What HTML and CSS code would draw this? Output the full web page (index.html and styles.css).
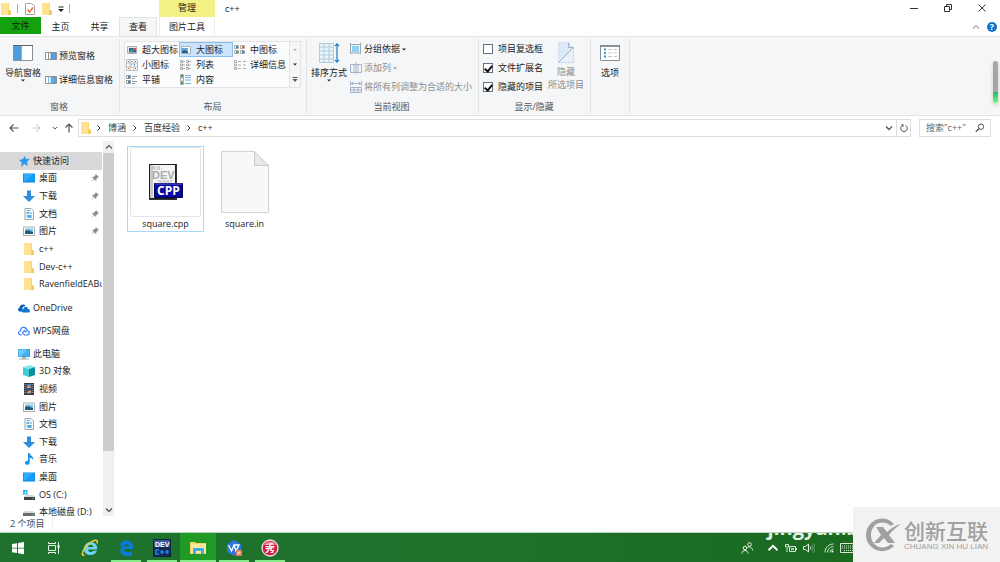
FILE: index.html
```html
<!DOCTYPE html>
<html lang="zh-CN">
<head>
<meta charset="utf-8">
<meta name="viewport" content="width=device-width, initial-scale=1">
<title>c++</title>
<link rel="stylesheet" href="styles.css">
</head>
<body>
<svg class="sprite" aria-hidden="true">
  <symbol id="folder" viewBox="0 0 12 14"><path d="M1 1h8v7l2 1v4H1z" fill="#f8d775"/><path d="M1 1h7v12H1z" fill="#ffe391"/><path d="M8.500 8.500h2v4.500h-2z" fill="#f0c659"/></symbol>
  <symbol id="desktop" viewBox="0 0 12 12"><path d="M0 1.500h12v9H0z" fill="#0a84dc"/><path d="M.5 2h11v7.500H.5z" fill="#139dfb"/><path d="M1 2h9L2 9.500H1z" fill="#2cacff"/></symbol>
  <symbol id="download" viewBox="0 0 12 12"><path d="M4 .5h4V6h4L6 12 0 6h4z" fill="#2f8ddd"/></symbol>
  <symbol id="document" viewBox="0 0 12 12"><path d="M2 .5h6l2.500 2.500v8.500H2z" fill="#f7fafc" stroke="#9fa6ab"/><path d="M3.500 4h3v2h-3zm1 3h4v3h-4z" fill="#68b5ea"/><path d="M4 2.500h3M7 5h2M3.500 8h5" stroke="#368fd0" stroke-width=".8"/></symbol>
  <symbol id="picture" viewBox="0 0 12 12"><path d="M.5 2h11v8.500H.5z" fill="#fff" stroke="#a8adb1"/><path d="M2 3.500h8V9H2z" fill="#82c6ee"/><path d="M2 6l3-1 5 2v2H2z" fill="#245c7b"/></symbol>
  <symbol id="star" viewBox="0 0 12 12"><path d="M7 1l1 3 4-.2L9 7l1 4-3.500-2L3 12l.7-4.500L1 5l3.500-.8z" fill="#2d9bea"/></symbol>
  <symbol id="pin" viewBox="0 0 10 10"><path d="M6 0l4 4-1.500.4-1.800 2L6.500 9 4 6.500 0 10l3.400-4L1 3.600l2.600-.3 2-1.800z" fill="#7e909c"/></symbol>
  <symbol id="onedrive" viewBox="0 0 12 12"><path d="M1 9.500C-.5 8 0 6 1.500 6c0-3 4-5 6-2C4.500 4 4 7 4 9.500z" fill="#0b5eb5"/><path d="M4.500 10.500c-2-1.500-.3-4 1-3.500C6 4 9.500 4 10 7c2.500 0 2.500 3.500.5 3.500z" fill="#1178cf"/></symbol>
  <symbol id="cloud" viewBox="0 0 12 12"><path d="M4 10H3C-.3 10 .2 6 2.500 6 2 1.500 8.500 1 9 5.500c3 0 3 4.500 0 4.500H6.500L4.500 8 6.500 5.500l2 2" fill="none" stroke="#3d84f1" stroke-width="1.200"/></symbol>
  <symbol id="pc" viewBox="0 0 12 12"><path d="M0 1h12v8H0z" fill="#278cca"/><path d="M.5 1.500h11v7H.5z" fill="#42b3f1"/><path d="M.5 1.500h9L2 8.500H.5z" fill="#70cbfa"/><path d="M4.500 9h3v1.500H11v1H1v-1h3.500z" fill="#9aabb6"/></symbol>
  <symbol id="cube" viewBox="0 0 12 12"><path d="M0 2l7-2 5 2-6 2z" fill="#8ae8ed"/><path d="M0 2l6 2v8l-6-2z" fill="#45cbd8"/><path d="M6 4l6-2v8l-6 2z" fill="#078e9f"/></symbol>
  <symbol id="video" viewBox="0 0 12 12"><path d="M1 0h10v12H1z" fill="#373b44"/><path d="M3.500 1h5v4.500h-5z" fill="#527bbc"/><path d="M3.500 6.500h5V11h-5z" fill="#3c5d9b"/><path d="M4 4l2-2 2 3H4zm0 5l4-2v3H4z" fill="#e2a24c"/><path d="M2.200 1v10M9.800 1v10" stroke="#aaa" stroke-dasharray="1 1"/></symbol>
  <symbol id="music" viewBox="0 0 12 12"><path d="M5 0h1.500c.5 3 4.500 3 3.500 7-.5-1.500-2-2-3.300-2.200V9.500c0 3-4.700 3-4.700.5C2 8 4 7.600 5 8z" fill="#1593e8"/></symbol>
  <symbol id="drive" viewBox="0 0 12 12"><path d="M2 5h8l2 2H0z" fill="#d4d7d9"/><path d="M0 7h12v3H0z" fill="#6b6e70"/><path d="M9.500 8h1v1h-1z" fill="#5bea62"/></symbol>
  <symbol id="osdrive" viewBox="0 0 12 12"><path d="M0 1h2v2H0zm2.500 0h2v2h-2zM0 3.500h2v2H0zm2.500 0h2v2h-2z" fill="#11aee8"/><path d="M3 6h7l2 2H1z" fill="#d2d5d7"/><path d="M1 8h11v3H1z" fill="#414446"/><path d="M9.500 9h1v1h-1z" fill="#5bea62"/></symbol>
  <symbol id="chev-down" viewBox="0 0 8 8"><path d="M1 2.500l3 3 3-3" fill="none" stroke="currentColor" stroke-width="1.300"/></symbol>
  <symbol id="chev-right" viewBox="0 0 8 8"><path d="M2.500 1.500L5 4 2.500 6.500" fill="none" stroke="currentColor"/></symbol>
  <symbol id="chev-up" viewBox="0 0 8 8"><path d="M1 5.500l3-3 3 3" fill="none" stroke="currentColor" stroke-width="1.200"/></symbol>
  <symbol id="arrow-left" viewBox="0 0 10 10"><path d="M9.500 5H1M4.500 1.500L1 5l3.500 3.500" fill="none" stroke="currentColor" stroke-width="1.200"/></symbol>
  <symbol id="arrow-right" viewBox="0 0 10 10"><path d="M.5 5H9M5.500 1.500L9 5 5.500 8.500" fill="none" stroke="currentColor" stroke-width="1.200"/></symbol>
  <symbol id="arrow-up" viewBox="0 0 10 10"><path d="M5 9.500V1M1.500 4.500L5 1l3.500 3.500" fill="none" stroke="currentColor" stroke-width="1.200"/></symbol>
  <symbol id="caret" viewBox="0 0 4 3"><path d="M0 .5h4l-2 2z" fill="currentColor"/></symbol>
</svg>

<header class="head">
  <div class="quick">
    <svg width="12" height="14"><use href="#folder"/></svg>
    <span class="bar"></span>
    <button aria-label="属性"><svg width="12" height="14" viewBox="0 0 12 14"><path d="M1.500 1.500h6L10.500 4v8.500h-9z" fill="#fff" stroke="#a4a4a4"/><path d="M3.500 7.500l2 2.500L9 5.500" fill="none" stroke="#ee7343" stroke-width="1.500"/></svg></button>
    <button aria-label="新建文件夹"><svg width="12" height="14"><use href="#folder"/></svg></button>
    <button aria-label="自定义快速访问工具栏"><svg width="6" height="8" viewBox="0 0 6 8"><path d="M.5 2h5" stroke="#222"/><path d="M0 4h6L3 7z" fill="#222"/></svg></button>
    <span class="bar"></span>
  </div>
  <div class="context">管理</div>
  <div class="title">c++</div>
  <div class="window-buttons">
    <button aria-label="最小化"><svg width="10" height="10" viewBox="0 0 10 10"><path d="M1 5.500h8" stroke="#333"/></svg></button>
    <button aria-label="还原"><svg width="10" height="10" viewBox="0 0 10 10"><path d="M1.500 3.500h5v5h-5zM3.500 3V1.500h5v5H7" fill="none" stroke="#333"/></svg></button>
    <button aria-label="关闭"><svg width="10" height="10" viewBox="0 0 10 10"><path d="M1.500 1.500l7 7M8.500 1.500l-7 7" stroke="#333"/></svg></button>
  </div>
  <nav class="tabs">
    <button class="tab file">文件</button><button class="tab">主页</button><button class="tab">共享</button><button class="tab active">查看</button>
  </nav>
  <button class="tab tools">图片工具</button>
  <div class="help">
    <button class="faint" aria-label="折叠功能区"><svg width="8" height="8"><use href="#chev-up"/></svg></button>
    <button class="question" aria-label="帮助">?</button>
  </div>
</header>

<section class="ribbon">
  <div class="group panes">
    <div class="controls">
      <button class="big"><svg width="22" height="22" viewBox="0 0 22 22"><path d="M1.500 3.500h19v15h-19z" fill="#fff" stroke="#8a8f94"/><path d="M2 4h7v14H2z" fill="#4a9de0"/><path d="M9.500 4v14" stroke="#a5aab0"/><path d="M1 3.500h20" stroke="#666"/></svg><span>导航窗格</span><svg width="4" height="3"><use href="#caret"/></svg></button>
      <div class="stack two">
        <button><svg width="12" height="10" viewBox="0 0 12 10"><path d="M.5 1.500h11v7H.5z" fill="#fff" stroke="#8a8f94"/><path d="M6 2h5v6H6z" fill="#4a9de0"/><path d="M3.500 2v6M6 2v6" stroke="#8a8f94"/></svg>预览窗格</button>
        <button><svg width="12" height="10" viewBox="0 0 12 10"><path d="M.5 1.500h11v7H.5z" fill="#fff" stroke="#8a8f94"/><path d="M6 2h5v6H6z" fill="#4a9de0"/><path d="M7 4h3M7 6h3M3.500 2v6M6 2v6" stroke="#80b9e7"/></svg>详细信息窗格</button>
      </div>
    </div>
    <h2>窗格</h2>
  </div>
  <div class="group layout">
    <div class="controls">
      <div class="gallery">
        <button><svg width="12" height="12" viewBox="0 0 12 12"><path d="M1.500 2.500h9v7h-9z" fill="#dfeaf3" stroke="#aaa"/><path d="M3 4h7v4.500H3z" fill="#2b65ae"/><path d="M3 8l3-3 2 3z" fill="#49a34d"/><path d="M7 4h3v2H7z" fill="#db553d"/></svg>超大图标</button>
        <button class="selected"><svg width="12" height="12" viewBox="0 0 12 12"><path d="M1.500 2.500h9v7h-9z" fill="#fff" stroke="#a5b3bd"/><path d="M2 4h6v4H2z" fill="#65a9dc"/><path d="M2 7l3-1 3 2v1H2z" fill="#285d8b"/></svg>大图标</button>
        <button><svg width="12" height="12" viewBox="0 0 12 12"><path d="M.5 1.500h4v3h-4zm6 0h4v3h-4zm-6 5h4v3h-4zm6 0h4v3h-4z" fill="#fff" stroke="#aaa"/><path d="M2 2h2v2H2zM8 7h2v2H8z" fill="#378ace"/><path d="M8 2h2v2H8z" fill="#d7663b"/><path d="M2 7h2v2H2z" fill="#45a150"/></svg>中图标</button>
        <button><svg width="12" height="12" viewBox="0 0 12 12"><path d="M.5.500h11v11H.5zM4 .5v11M8 .5v11M.5 4h11M.5 8h11" fill="#fff" stroke="#bbb"/><path d="M2 2h1v1H2zm7 3H8v1h1z" fill="#378ace"/><path d="M5 2h1v1H5zM2 9h1v1H2zm7-7h1v1H9z" fill="#d7663b"/><path d="M5 5h1v1H5zm4 4h1v1H9z" fill="#45a150"/></svg>小图标</button>
        <button><svg width="12" height="12" viewBox="0 0 12 12"><path d="M.5 1.500h2v2h-2zm0 3.500h2v2h-2zm0 3.500h2v2h-2zm6-7h2v2h-2zm0 3.500h2v2h-2zm0 3.500h2v2h-2zM3 2.500h2M3 6h2M3 9.500h2M9 2.500h2M9 6h2M9 9.500h2" fill="none" stroke="#aaa"/></svg>列表</button>
        <button><svg width="12" height="12" viewBox="0 0 12 12"><path d="M.5 1.500h2v2h-2zm0 3.500h2v2h-2zm0 3.500h2v2h-2zM4 2.500h3M4 6h3M4 9.500h3M9 2.500h3M9 6h3M9 9.500h3" fill="none" stroke="#aaa"/></svg>详细信息</button>
        <button><svg width="12" height="12" viewBox="0 0 12 12"><path d="M.5 1.500h4v3h-4zm0 5h4v3h-4zM6 2.500h5M6 4.500h3M6 7.500h5M6 9.500h3" fill="none" stroke="#999"/><path d="M2 2h2v2H2zM2 7h2v2H2z" fill="#378ace"/></svg>平铺</button>
        <button><svg width="12" height="12" viewBox="0 0 12 12"><path d="M.5.500h3v3h-3zm0 3.500h3v3h-3zm0 3.500h3v3h-3z" fill="none" stroke="#aaa"/><path d="M5 1.500h6M5 3.500h6M5 6h6M5 9.500h6" stroke="#79ade0"/><path d="M1 1h2v2H1zm0 7h2v2H1z" fill="#45a150"/></svg>内容</button>
      </div>
      <div class="gallery-scroll">
        <button class="faint" aria-label="上一行"><svg width="4" height="3" viewBox="0 0 4 3"><path d="M0 2.500h4l-2-2z" fill="currentColor"/></svg></button>
        <button aria-label="下一行"><svg width="4" height="3"><use href="#caret"/></svg></button>
        <button aria-label="更多"><svg width="6" height="6" viewBox="0 0 6 6"><path d="M.5.500h5" stroke="#555"/><path d="M.5 2h5L3 5z" fill="#555"/></svg></button>
      </div>
    </div>
    <h2>布局</h2>
  </div>
  <div class="group view">
    <div class="controls">
      <button class="big"><svg width="22" height="22" viewBox="0 0 22 22"><path d="M1.500 1.500h14v19h-14zM6 1v20M11 1v20M1 5h15M1 9h15M1 13h15M1 17h15" fill="#e8f5fd" stroke="#b3cbdb"/><path d="M19 2v18M17 4l2-2 2 2M17 18l2 2 2-2" fill="none" stroke="#2d83c5" stroke-width="1.300"/></svg><span>排序方式</span><svg width="4" height="3"><use href="#caret"/></svg></button>
      <div class="stack">
        <button><svg width="12" height="12" viewBox="0 0 12 12"><path d="M.5 0v11M10.500 0v11M0 1.500h11M0 10h11" stroke="#9ba7b0"/><path d="M2 3h7v6H2z" fill="#8fd0f7"/></svg>分组依据<svg width="4" height="3"><use href="#caret"/></svg></button>
        <button disabled><svg width="12" height="12" viewBox="0 0 12 12"><path d="M.5 2.500h11v8H.5zM4 2v9M8 2v9M6 0v12" fill="none" stroke="#a3b2c8"/></svg>添加列<svg width="4" height="3"><use href="#caret"/></svg></button>
        <button disabled><svg width="12" height="12" viewBox="0 0 12 12"><path d="M.5 6.500h11v5H.5zM4 6v5M8 6v5M0 9h12M.5 0v5M11.500 0v5M1 2.500h10M3 1L1.500 2.500 3 4M9 1l1.500 1.500L9 4" fill="none" stroke="#a3b2c8"/></svg>将所有列调整为合适的大小</button>
      </div>
    </div>
    <h2>当前视图</h2>
  </div>
  <div class="group show">
    <div class="controls">
      <div class="stack">
        <label><input type="checkbox">项目复选框</label>
        <label><input type="checkbox" checked>文件扩展名</label>
        <label><input type="checkbox" checked>隐藏的项目</label>
      </div>
      <button class="big" disabled><svg width="18" height="22" viewBox="0 0 18 22"><path d="M1.500.500h10l5 5v15h-15z" fill="#e9f0f9" stroke="#c1cfe2" stroke-dasharray="2 1"/><path d="M1.500.500h10l5 5L1.500 20z" fill="#dce8f6"/><path d="M11.500.500v5h5L1.500 20.500" fill="none" stroke="#9fb3cf"/></svg><span>隐藏</span><span>所选项目</span></button>
    </div>
    <h2>显示/隐藏</h2>
  </div>
  <div class="group options">
    <div class="controls">
      <button class="big"><svg width="22" height="22" viewBox="0 0 22 22"><path d="M1.500 3.500h19v15h-19z" fill="#fff" stroke="#8a8f94"/><path d="M1 4h20" stroke="#8a8f94" stroke-width="2"/><path d="M5 7.500h2M5 11h2M5 14.500h2" stroke="#3c91d2" stroke-width="2"/><path d="M9 7.500h4M15 7.500h3M9 11h4M15 11h3M9 14.500h4M15 14.500h3" stroke="#c4c7c9"/></svg><span>选项</span></button>
    </div>
  </div>
</section>

<div class="navigation">
  <div class="history">
    <button aria-label="后退"><svg width="10" height="10"><use href="#arrow-left"/></svg></button>
    <button disabled aria-label="前进"><svg width="10" height="10"><use href="#arrow-right"/></svg></button>
    <button class="recent" aria-label="最近浏览的位置"><svg width="6" height="6"><use href="#chev-down"/></svg></button>
    <button aria-label="上移"><svg width="10" height="10"><use href="#arrow-up"/></svg></button>
  </div>
  <div class="address">
    <svg width="12" height="14"><use href="#folder"/></svg>
    <svg width="8" height="8"><use href="#chev-right"/></svg><a href="#">博涵</a>
    <svg width="8" height="8"><use href="#chev-right"/></svg><a href="#">百度经验</a>
    <svg width="8" height="8"><use href="#chev-right"/></svg><a href="#">c++</a>
    <button class="drop" aria-label="历史记录"><svg width="8" height="8"><use href="#chev-down"/></svg></button>
    <button class="refresh" aria-label="刷新"><svg width="10" height="10" viewBox="0 0 10 10"><path d="M3.500 2.500C.5 4 1.500 8.500 5 8.500S9.500 4 6.500 2.500M2.500 1.500H4V4" fill="none" stroke="#555"/></svg></button>
  </div>
  <div class="search">
    <input type="text" aria-label="搜索" placeholder='搜索"c++"'>
    <svg width="10" height="10" viewBox="0 0 10 10"><circle cx="6" cy="3.700" r="2.700" fill="none" stroke="#555"/><path d="M4 5.500L.8 8.800" stroke="#555" stroke-width="1.300"/></svg>
  </div>
</div>

<main class="main">
  <nav class="tree">
    <div class="branch quick-access">
      <a class="root current" href="#"><svg width="12" height="12"><use href="#star"/></svg>快速访问</a>
      <a href="#"><svg width="12" height="12"><use href="#desktop"/></svg>桌面<svg class="pin" width="8" height="8"><use href="#pin"/></svg></a>
      <a href="#"><svg width="12" height="12"><use href="#download"/></svg>下载<svg class="pin" width="8" height="8"><use href="#pin"/></svg></a>
      <a href="#"><svg width="12" height="12"><use href="#document"/></svg>文档<svg class="pin" width="8" height="8"><use href="#pin"/></svg></a>
      <a href="#"><svg width="12" height="12"><use href="#picture"/></svg>图片<svg class="pin" width="8" height="8"><use href="#pin"/></svg></a>
      <a href="#"><svg width="12" height="14"><use href="#folder"/></svg>c++</a>
      <a href="#"><svg width="12" height="14"><use href="#folder"/></svg>Dev-c++</a>
      <a href="#"><svg width="12" height="14"><use href="#folder"/></svg>RavenfieldEABuild</a>
    </div>
    <a class="root" href="#"><svg width="12" height="12"><use href="#onedrive"/></svg>OneDrive</a>
    <a class="root" href="#"><svg width="12" height="12"><use href="#cloud"/></svg>WPS网盘</a>
    <div class="branch this-pc">
      <a class="root" href="#"><svg width="12" height="12"><use href="#pc"/></svg>此电脑</a>
      <a href="#"><svg width="12" height="12"><use href="#cube"/></svg>3D 对象</a>
      <a href="#"><svg width="12" height="12"><use href="#video"/></svg>视频</a>
      <a href="#"><svg width="12" height="12"><use href="#picture"/></svg>图片</a>
      <a href="#"><svg width="12" height="12"><use href="#document"/></svg>文档</a>
      <a href="#"><svg width="12" height="12"><use href="#download"/></svg>下载</a>
      <a href="#"><svg width="12" height="12"><use href="#music"/></svg>音乐</a>
      <a href="#"><svg width="12" height="12"><use href="#desktop"/></svg>桌面</a>
      <a href="#"><svg width="12" height="12"><use href="#osdrive"/></svg>OS (C:)</a>
      <a href="#"><svg width="12" height="12"><use href="#drive"/></svg>本地磁盘 (D:)</a>
    </div>
  </nav>
  <div class="scrollbar">
    <svg width="8" height="8"><use href="#chev-up"/></svg>
    <div class="track"><div class="thumb"></div></div>
    <svg width="8" height="8"><use href="#chev-down"/></svg>
  </div>
  <div class="files">
    <figure class="item hover">
      <div class="thumbnail framed">
        <svg width="36" height="38" viewBox="0 0 36 38"><path d="M1 1h28v36H1z" fill="#333"/><path d="M1.500 1.500h26v34h-26z" fill="#f4f4f4" stroke="#222"/><path d="M2 2h3v33H2z" fill="#c9c9c9"/><path d="M5 4h8M5 6h9M10 18h14M12 20h10" stroke="#aaa" stroke-dasharray="3 1"/><text x="4" y="16" class="dev">DEV</text><path d="M6.500 20.500h28v14h-28z" fill="#0808a0" stroke="#000050"/><path d="M7 21h27" stroke="#5858d4"/><text x="9" y="32" class="cpp">CPP</text></svg>
      </div>
      <figcaption>square.cpp</figcaption>
    </figure>
    <figure class="item">
      <div class="thumbnail">
        <svg width="48" height="62" viewBox="0 0 48 62"><path d="M.5.500h33l14 14v47H.5z" fill="#f7f8f9" stroke="#d2d3d4"/><path d="M33.500.500v14h14z" fill="#e7e9ea" stroke="#c8c9ca"/></svg>
      </div>
      <figcaption>square.in</figcaption>
    </figure>
  </div>
</main>

<footer class="status"><span>2 个项目</span></footer>

<div class="taskbar">
  <button class="task" aria-label="开始"><svg width="14" height="14" viewBox="0 0 14 14"><path d="M1 3l5-.8v4.500H1zM7 2l6-1v5.700H7zM1 7.500h5V12l-5-.8zM7 7.500h6v5.700l-6-1z" fill="#fff"/></svg></button>
  <button class="task" aria-label="任务视图"><svg width="14" height="14" viewBox="0 0 14 14"><path d="M1.500 4.500h7v5h-7zM1.500 1v1.500h7V1M1.500 13v-1.500h7V13M11.500 1v12" fill="none" stroke="#e4f2e6"/><path d="M10.500 4h2v3h-2z" fill="#fff"/></svg></button>
  <button class="task" aria-label="Internet Explorer"><svg width="18" height="18" viewBox="0 0 18 18"><path d="M9.500 3c4.500 0 7 3 6.800 7.500H7c.3 3 4 3.200 5 1.300h4C14 18 3 17.500 3 10c0-4 3-7 6.500-7zM7 8h5.300C12 5 7.500 5 7 8z" fill="#6fd3f8"/><path d="M3.500 16C-1 18 2 9 8 4.500s9.500-4 8 0" fill="none" stroke="#f0cc45" stroke-width="1.500"/></svg></button>
  <button class="task open" aria-label="Edge"><svg width="18" height="18" viewBox="0 0 18 18"><path d="M2 8C3 0 16-1 16 8v2H7c0 4 5 4 8 2v4C9 19 2 16 3.500 10.500 4 8 6 6.500 7.500 6 5 6 3 7 2 8zm5.200-.5H12c0-3-4-3-4.800 0z" fill="#0b7bdb"/></svg></button>
  <button class="task open" aria-label="Dev-C++"><svg width="18" height="18" viewBox="0 0 18 18"><path d="M.5.500h17v17H.5z" fill="#172b52" stroke="#0b1e43"/><path d="M1 1h16v7H1z" fill="#3b5894"/><text x="2" y="8" class="dev-small">DEV</text><path d="M6 11H3v4h3M7 13h4M9 11v4M12 13h4M14 11v4" fill="none" stroke="#1b86ed" stroke-width="1.500"/></svg></button>
  <button class="task open active" aria-label="文件资源管理器"><svg width="18" height="16" viewBox="0 0 18 16"><path d="M1 2h5l1 1h10v11H1z" fill="#f7d36c"/><path d="M2 4h15v9H2z" fill="#ffe89e"/><path d="M4 8h11v6h-3v-3H7v3H4z" fill="#3daee5"/></svg></button>
  <button class="task open" aria-label="WPS"><svg width="18" height="18" viewBox="0 0 18 18"><path d="M9 1l7 4v8l-7 4-7-4V5z" fill="#2d76df"/><path d="M3.500 6l3 6L9 6l2 6 3-6H9" fill="none" stroke="#fff" stroke-width="1.300"/><path d="M11 11h6v6h-6z" fill="#f37a4a"/><path d="M13 16v-3h2v1.500h-2" fill="none" stroke="#fff" stroke-width=".7"/></svg></button>
  <button class="task open" aria-label="秀"><svg width="18" height="18" viewBox="0 0 18 18"><circle cx="9" cy="9" r="8" fill="#d21c41" stroke="#f1dfe2" stroke-width="1.300"/><path d="M2.500 6c3-5 10-5 13 0z" fill="#ec718a"/><text x="4" y="13" class="show-mark">秀</text></svg></button>
  <div class="url">jingyan.baidu.com</div>
  <div class="tray">
    <svg width="12" height="12" viewBox="0 0 12 12"><g fill="none" stroke="#e8f3e8"><circle cx="4" cy="6" r="1.800"/><path d="M1 11.500c0-4 6-4 6 0"/><circle cx="8.500" cy="2.500" r="1.800"/><path d="M6.500 5.500c2-1.500 5 0 5 3"/></g></svg>
    <svg class="tray-up" width="12" height="12"><use href="#chev-up"/></svg>
    <svg width="12" height="10" viewBox="0 0 12 10"><g fill="none" stroke="#d5e7d5"><path d="M4.500 3.500h6v5h-6zM11.500 5v2M6 5l3 2M9 5L6 7M2 5v4M.5 1.500h3V4h-3z"/></g></svg>
    <svg width="12" height="10" viewBox="0 0 12 10"><g fill="none" stroke="#e2efe2"><path d="M.5 3.500h2L5.500 1v8l-3-2.500h-2zM7 3.500c1 1 1 2 0 3"/><path d="M8.500 2c2 2 2 4 0 6M10 .5c3 3 3 6 0 9" opacity=".5"/></g></svg>
    <svg class="wifi" width="10" height="10" viewBox="0 0 10 10"><g fill="none" stroke="#d5e7d5"><path d="M1 9.500C1 4 5 1 9.500 1M3.500 9.500c0-3.500 3-6 6-6M6 9.500C6 7.500 8 6 9.500 6"/></g><circle cx="8.500" cy="8.500" r="1" fill="#fff"/></svg>
    <svg width="18" height="10" viewBox="0 0 18 10"><path d="M.5.500h17v9H.5z" fill="none" stroke="#d5e7d5"/><path d="M2 3h14M2 5h14M4 7.500h10" stroke="#d5e7d5" stroke-dasharray="1 1"/></svg>
  </div>
</div>

<div class="meter"></div>
<aside class="brand">
  <svg width="36" height="34" viewBox="0 0 36 34"><path d="M29 6C18-6 1 3 1 17s17 22 28 11l-3-2C16 34 6 27 6 17S16 0 26 8z" fill="#a0a0a0"/><path d="M11 9h7l4 5c4-4 9-7 14-8-5 3-9 7-12 11l6 8h-7l-4-5-5 5H9l7-8z" fill="#a0a0a0"/></svg>
  <div class="brand-text"><strong>创新互联</strong><span>CHUANG XIN HU LIAN</span></div>
</aside>
</body>
</html>
```
FILE: styles.css
```css
* { box-sizing: border-box; }
body {
  margin: 0;
  height: 100vh;
  overflow: hidden;
  display: flex;
  flex-direction: column;
  background: #fff;
  color: #222;
  font: 9px/12px "Open Sans", "Noto Sans CJK SC", sans-serif;
}
button, input {
  margin: 0;
  padding: 0;
  border: 0;
  background: none;
  color: inherit;
  font: inherit;
}
button { display: flex; align-items: center; justify-content: center; white-space: nowrap; }
a { color: inherit; text-decoration: none; white-space: nowrap; }
svg { flex: none; display: block; }
h2, figure { margin: 0; font: inherit; }
.sprite { position: absolute; width: 0; height: 0; }
.faint { color: #aaa; }

/* Title bar and tabs */
.head {
  flex: none;
  display: grid;
  grid-template-columns: 159px 56px 1fr auto;
  grid-template-rows: 17px 19px;
}
.quick { display: flex; align-items: center; }
.bar { width: 1px; height: 9px; margin: 0 6px 0 5px; background: #aaa; }
.quick button { margin-right: 5px; }
.quick .bar:last-child { margin: 0; }
.context { background: #f3f085; text-align: center; line-height: 15px; }
.title { padding-left: 10px; line-height: 18px; }
.window-buttons { display: flex; padding-right: 1px; }
.window-buttons button { width: 34px; height: 15px; }
.tabs { display: flex; grid-column: 1; }
.tab { width: 39px; }
.file { width: 41px; height: 17px; background: #13a10e; color: #062c06; }
.active.tab { width: 38px; background: #f5f6f7; border: 1px solid #e2e3e4; border-bottom: 0; }
.tools { width: auto; border: solid #eceded; border-width: 0 1px; }
.help { grid-column: 4; display: flex; justify-content: flex-end; align-items: center; gap: 7px; padding-right: 3px; }
.question { width: 10px; height: 10px; border-radius: 50%; background: #1072c8; color: #fff; font-weight: bold; line-height: 10px; }

/* Ribbon */
.ribbon {
  flex: none;
  display: flex;
  height: 80px;
  padding: 2px 0;
  background: #f5f6f7;
  border: solid #e2e3e4;
  border-width: 1px 0;
}
.group { display: flex; flex-direction: column; justify-content: space-between; border-right: 1px solid #e2e3e4; padding: 3px 6px 0 5px; }
.group h2 { text-align: center; color: #555; }
.controls { display: flex; gap: 4px; }
.big { flex-direction: column; justify-content: flex-start; }
.big svg + span { margin-top: 2px; }
.stack { display: flex; flex-direction: column; gap: 7px; padding-top: 1px; }
.stack button, .stack label { display: flex; align-items: center; justify-content: flex-start; gap: 2px; height: 12px; white-space: nowrap; }
.stack.two { gap: 12px; padding-top: 8px; }
.big span { line-height: 13px; }
.view .controls { gap: 3px; }
button:disabled { color: #8d8d8d; }
.gallery {
  display: grid;
  grid-template-columns: 54px 54px 56px;
  grid-template-rows: 15px 16px 14px;
  background: #fbfcfd;
  border: 1px solid #e2e3e4;
}
.gallery button { justify-content: flex-start; gap: 4px; padding-left: 1px; }
.gallery .selected { background: #cce4fb; outline: 1px solid #8abdf0; outline-offset: -1px; }
.layout .controls { gap: 0; }
.gallery-scroll { display: grid; grid-template-rows: repeat(3, 1fr); width: 11px; border: 1px solid #e2e3e4; border-left: 0; }
.layout { padding: 2px 5px 0 4px; }
.view { padding-left: 4px; }
.show { padding-left: 4px; }
.show .stack label { gap: 5px; }
.show .big { padding: 0 1px; }
.show .big svg + span { margin-top: 1px; }
.show .controls { gap: 4px; }
.show { padding-right: 5px; }
.options { padding: 3px 8px; }
input[type="checkbox"] { appearance: none; width: 10px; height: 10px; border: 1px solid #666f83; background: #fff; display: grid; place-items: center; }
input[type="checkbox"]:checked::after { content: ""; width: 3px; height: 6px; margin-bottom: 2px; border: solid #111; border-width: 0 2px 2px 0; transform: rotate(40deg); }

/* Address row */
.navigation { flex: none; display: flex; align-items: center; padding: 3px 9px 1px 8px; }
.history { display: flex; align-items: center; width: 70px; color: #555; }
.history button { width: 12px; margin-right: 10px; }
.history button:disabled { color: #d0d0d0; }
.history .recent { width: 6px; margin-right: 5px; }
.history button:last-child { margin: 0; }
.address { flex: 1; display: flex; align-items: center; height: 18px; padding-left: 1px; border: 1px solid #dedede; color: #333; }
.address > svg + svg { margin-left: 3px; }
.address > a { margin: 0 5px; }
.drop { width: 14px; margin-left: auto; color: #555; }
.refresh { width: 14px; height: 16px; border-left: 1px solid #dedede; }
.search { display: flex; align-items: center; width: 72px; height: 18px; margin-left: 8px; padding: 0 5px 0 6px; border: 1px solid #dedede; }
.search input { flex: 1; min-width: 0; outline: 0; }
.search input::placeholder { color: #666; }

/* Explorer body */
.main { flex: 1; min-height: 0; display: flex; padding-top: 3px; }
.tree { width: 103px; padding: 11px 1px 0 0; overflow: hidden; }
.branch { display: grid; grid-auto-rows: 1fr; }
.quick-access { height: 141px; margin-bottom: 6px; }
.this-pc { height: 176px; }
.tree a { display: flex; align-items: center; gap: 4px; height: 18px; padding-left: 23px; overflow: hidden; }
.branch a { height: auto; }
.tree .root { padding-left: 18px; gap: 3px; }
.tree > .root { margin-bottom: 5px; height: 18px; }
.tree .current { background: #d9d9d9; }
.pin { margin-left: auto; margin-right: 3px; }
.scrollbar { width: 11px; display: flex; flex-direction: column; align-items: center; padding: 2px 0; background: #f0f0f0; color: #555; }
.track { flex: 1; width: 100%; margin: 2px 0; }
.thumb { height: 85%; background: #cdcdcd; }
.files { flex: 1; display: flex; align-items: flex-start; gap: 2px; padding: 5px 13px; }
.item { width: 77px; height: 86px; padding: 0 2px; border: 1px solid transparent; text-align: center; }
.item.hover { border-color: #a6d8fa; }
.thumbnail { height: 70px; display: grid; place-items: center; }
.thumbnail.framed { border: 1px solid #e4e4e4; border-radius: 2px; }
.item figcaption { line-height: 14px; }
.dev { font: bold 11px "Liberation Sans", sans-serif; fill: #aaa; }
.cpp { font: bold 12px "Open Sans", sans-serif; fill: #fff; }
.dev-small { font: bold 7px "Liberation Sans", sans-serif; fill: #fff; }
.show-mark { font: bold 10px "Noto Sans CJK SC", sans-serif; fill: #fff; }
.status { flex: none; height: 16px; padding-left: 10px; color: #3b4a66; line-height: 16px; }
.status span { padding-right: 8px; border-right: 1px solid #f0f0f0; }

/* Taskbar */
.taskbar { position: relative; flex: none; display: flex; height: 30px; overflow: hidden; border-top: 1px solid #b9d3bd; background: linear-gradient(90deg, #1e722e, #1f722a 50%, #17661b); }
.task { width: 36px; position: relative; }
.task.active { background: #1f9a27; }
.open::after { content: ""; position: absolute; left: 3px; right: 3px; bottom: 0; height: 2px; background: #84eb89; }
.active.open::after { left: 0; right: 0; }
.tray { display: flex; align-items: center; gap: 6px; margin-left: auto; padding-right: 142px; }
.tray-up { color: #fff; margin: 0 0 0 8px; }
.tray .wifi { margin-left: 3px; }
.url { position: absolute; right: 49px; top: -17px; color: #e4f1e4; font: bold 20px/24px "Open Sans", sans-serif; }

/* Floating items above the window */
.meter { position: absolute; top: 61px; right: 2px; width: 5px; height: 42px; border-radius: 3px; background: linear-gradient(#a6a6a6 73%, #28b95b 73%, #75f288); box-shadow: 0 2px 4px #ccc; }
.brand { position: absolute; right: 0; bottom: 0; width: 147px; height: 55px; display: flex; align-items: center; gap: 3px; padding-left: 12px; background: #f2f2f2; color: #a0a0a0; }
.brand-text { display: flex; flex-direction: column; white-space: nowrap; }
.brand strong { font: 500 21px/24px "Noto Sans CJK SC", sans-serif; }
.brand span { font: 8px/10px "Liberation Sans", sans-serif; }
```
